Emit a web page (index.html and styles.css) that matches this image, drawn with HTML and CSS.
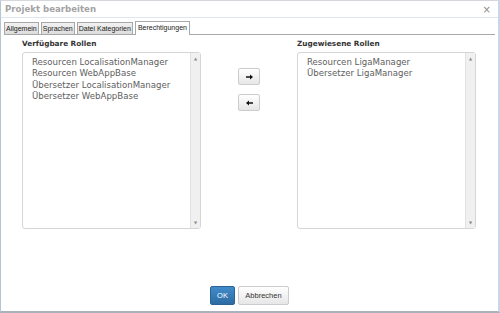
FILE: index.html
```html
<html>
<head>
  <title>Projekt bearbeiten</title>
  <meta charset="utf-8">
  <link rel="stylesheet" href="styles.css">
</head>
<body>
  <div class="dialog">
    <div class="titlebar">
      <span class="title">Projekt bearbeiten</span>
      <span class="close">&#215;</span>
    </div>
    <div class="tabs">
      <div class="tab">Allgemein</div>
      <div class="tab">Sprachen</div>
      <div class="tab">Datei Kategorien</div>
      <div class="tab active">Berechtigungen</div>
    </div>
    <div class="content">
      <div class="column">
        <label>Verfügbare Rollen</label>
        <div class="listbox">
          <ul>
            <li>Resourcen LocalisationManager</li>
            <li>Resourcen WebAppBase</li>
            <li>Übersetzer LocalisationManager</li>
            <li>Übersetzer WebAppBase</li>
          </ul>
          <div class="scrollbar"><span>&#9650;</span><span>&#9660;</span></div>
        </div>
      </div>
      <div class="movers">
        <button class="move-button">
          <svg width="7" height="6" viewBox="0 0 7 6"><path d="M0 2.2h4V0.5L7 3 4 5.5V3.8H0z" fill="#111"/></svg>
        </button>
        <button class="move-button">
          <svg width="7" height="6" viewBox="0 0 7 6"><path d="M7 2.2H3V0.5L0 3l3 2.5V3.8h4z" fill="#111"/></svg>
        </button>
      </div>
      <div class="column">
        <label>Zugewiesene Rollen</label>
        <div class="listbox">
          <ul>
            <li>Resourcen LigaManager</li>
            <li>Übersetzer LigaManager</li>
          </ul>
          <div class="scrollbar"><span>&#9650;</span><span>&#9660;</span></div>
        </div>
      </div>
    </div>
    <div class="footer">
      <button class="ok-button">OK</button>
      <button class="cancel-button">Abbrechen</button>
    </div>
  </div>
</body>
</html>
```

FILE: styles.css
```css
body {
  margin: 0;
  background-color: #ffffff;
  font-family: 'DejaVu Sans', Verdana, sans-serif;
}
.dialog {
  width: 500px;
  height: 313px;
  box-sizing: border-box;
  border-top: 1px solid #d4d8dc;
  border-left: 1px solid #b8c4d0;
  border-right: 2px solid #c8d6e8;
  border-bottom: 2px solid #a9b1ba;
  display: flex;
  flex-direction: column;
}
.titlebar {
  height: 16px;
  border-bottom: 1px solid #dde7f1;
  display: flex;
  align-items: center;
  justify-content: space-between;
  padding: 0 7px 0 4px;
}
.title {
  font-size: 8.6px;
  font-weight: bold;
  color: #a3a3a3;
}
.close {
  font-size: 10px;
  color: #8c8c8c;
}
.tabs {
  display: flex;
  align-items: flex-end;
  margin: 3px 3px 0 3px;
  height: 13px;
  border-bottom: 1px solid #a8a8a8;
}
.tab {
  font-family: 'Liberation Sans', Arial, sans-serif;
  font-size: 7px;
  color: #222222;
  height: 11px;
  line-height: 11px;
  padding: 0 1px;
  margin-right: 2px;
  border: 1px solid #a8a8a8;
  border-bottom: none;
  background: linear-gradient(#f2f2f2, #dcdcdc);
}
.tab.active {
  height: 13px;
  line-height: 12px;
  background: #ffffff;
  margin-bottom: -1px;
  padding: 0 2px;
}
.content {
  display: flex;
  padding: 5px 0 0 21px;
}
.column {
  display: flex;
  flex-direction: column;
}
label {
  font-size: 7.3px;
  font-weight: bold;
  color: #333333;
  height: 12px;
  line-height: 8px;
}
.listbox {
  width: 179px;
  height: 177px;
  box-sizing: border-box;
  border: 1px solid #d5d5d5;
  border-radius: 3px;
  display: flex;
}
.listbox ul {
  flex: 1;
  list-style: none;
  margin: 0;
  padding: 4px 0 0 9px;
}
.listbox li {
  font-size: 8.6px;
  line-height: 11.3px;
  color: #5e5e5e;
}
.scrollbar {
  width: 9px;
  background-color: #f0f0f0;
  border-left: 1px solid #e2e2e2;
  display: flex;
  flex-direction: column;
  justify-content: space-between;
  align-items: center;
  font-size: 4px;
  color: #888888;
  padding: 3px 0;
}
.movers {
  width: 96px;
  display: flex;
  flex-direction: column;
  align-items: center;
  gap: 9px;
  padding-top: 28px;
}
.move-button {
  width: 22px;
  height: 17px;
  padding: 0;
  border: 1px solid #cccccc;
  border-radius: 2px;
  background: linear-gradient(#ffffff, #e6e6e6);
  display: flex;
  align-items: center;
  justify-content: center;
}
.footer {
  margin-top: auto;
  display: flex;
  justify-content: center;
  gap: 3px;
  padding-bottom: 6px;
}
.ok-button {
  width: 25px;
  height: 19px;
  padding: 0;
  border: 1px solid #2a6496;
  border-radius: 2px;
  background: linear-gradient(#428bca, #2d6ca2);
  color: #ffffff;
  font-size: 7.5px;
}
.cancel-button {
  width: 51px;
  height: 19px;
  padding: 0;
  border: 1px solid #cccccc;
  border-radius: 2px;
  background: linear-gradient(#ffffff, #e6e6e6);
  color: #333333;
  font-size: 7.5px;
}
```
